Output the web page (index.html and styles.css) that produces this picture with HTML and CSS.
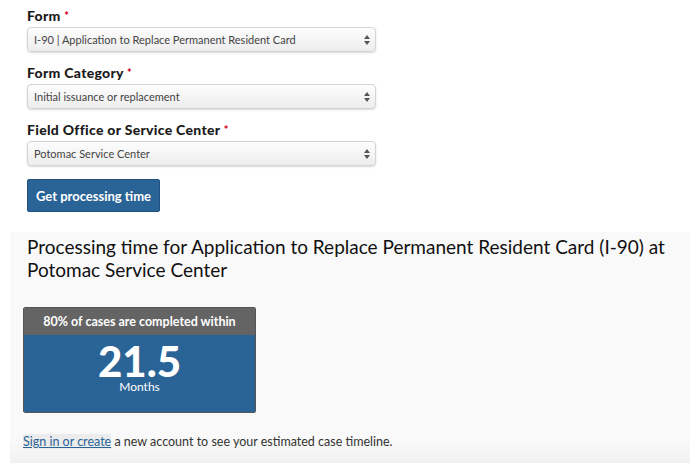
FILE: index.html
```html
<!DOCTYPE html>
<html lang="en">
<head>
    <meta charset="UTF-8">
    <meta name="viewport" content="width=device-width, initial-scale=1.0">
    <title>Check Case Processing Times</title>
    <link rel="stylesheet" href="styles.css">
</head>
<body>
    <form class="times-form">
        <div class="field">
            <label for="form">Form <span class="req">*</span></label>
            <div class="select">
                <span>I-90 | Application to Replace Permanent Resident Card</span>
                <svg width="6" height="10" viewBox="0 0 6 10"><path d="M3 0L6 4H0z M3 10L0 6h6z" fill="#555"/></svg>
            </div>
        </div>
        <div class="field">
            <label for="category">Form Category <span class="req">*</span></label>
            <div class="select">
                <span>Initial issuance or replacement</span>
                <svg width="6" height="10" viewBox="0 0 6 10"><path d="M3 0L6 4H0z M3 10L0 6h6z" fill="#555"/></svg>
            </div>
        </div>
        <div class="field">
            <label for="office">Field Office or Service Center <span class="req">*</span></label>
            <div class="select">
                <span>Potomac Service Center</span>
                <svg width="6" height="10" viewBox="0 0 6 10"><path d="M3 0L6 4H0z M3 10L0 6h6z" fill="#555"/></svg>
            </div>
        </div>
        <button type="button" class="btn">Get processing time</button>
    </form>

    <section class="results">
        <h2>Processing time for Application to Replace Permanent Resident Card (I-90) at Potomac Service Center</h2>
        <div class="time-card">
            <div class="time-head">80% of cases are completed within</div>
            <div class="time-body">
                <div class="time-num">21.5</div>
                <div class="time-unit">Months</div>
            </div>
        </div>
        <p class="signin"><a href="#">Sign in or create</a> a new account to see your estimated case timeline.</p>
    </section>
</body>
</html>
```

FILE: styles.css
```css
body { margin: 0; font-family: Lato, "Open Sans", Arial, sans-serif; color: #1b1b1b; background: #fff; }
.times-form { padding: 8px 0 0 27px; }
.field { margin-bottom: 13px; }
.field label { display: block; font-weight: 900; font-size: 14px; line-height: 16px; margin-bottom: 3px; letter-spacing: 0.3px; }
.req { color: #d0021b; font-size: 11px; vertical-align: top; }
.select { width: 349px; height: 25px; box-sizing: border-box; display: flex; align-items: center; justify-content: space-between; padding: 0 5px 0 6px; border: 1px solid #d4d4d4; border-radius: 4px; background: linear-gradient(#fdfdfd, #ededed); box-shadow: 0 1px 2px rgba(0, 0, 0, 0.15); font-size: 11px; color: #444; }
.btn { display: block; margin-top: 0; width: 133px; height: 33px; background-color: #2a6395; color: #fff; border: 1px solid #215180; border-radius: 2px; font-family: inherit; font-size: 13px; font-weight: 700; cursor: pointer; }
.results { margin: 20px 0 0 10px; padding: 3px 0 14px 13px; background: linear-gradient(#f9f9f9 90%, #f1f1f1); min-height: 206px; }
.results h2 { margin: 0 0 26px 4px; font-size: 19px; font-weight: 400; line-height: 23px; color: #111; }
.time-card { width: 231px; border: 1px solid #555; border-radius: 2px; overflow: hidden; }
.time-head { background: #646464; color: #fff; height: 27px; line-height: 27px; text-align: center; font-size: 12.5px; font-weight: 700; }
.time-body { background: #2a6395; color: #fff; height: 77px; text-align: center; }
.time-num { font-size: 42px; font-weight: 900; line-height: 34px; padding-top: 9px; }
.time-unit { font-size: 12px; line-height: 14px; margin-top: 2px; }
.signin { margin: 21px 0 0; font-size: 12.5px; color: #333; }
.signin a { color: #2a6395; background: #ececec; }
```
